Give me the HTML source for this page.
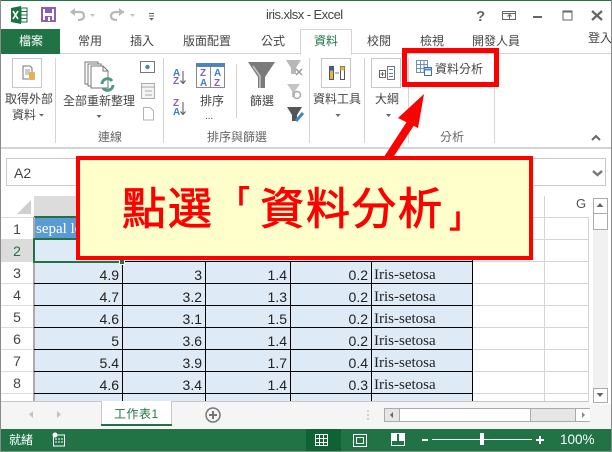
<!DOCTYPE html>
<html><head><meta charset="utf-8">
<style>
html,body{margin:0;padding:0;background:#fff}
#p{position:relative;width:612px;height:452px;overflow:hidden;background:#fff;font-family:"Liberation Sans","Noto Sans CJK TC",sans-serif;font-size:12px;color:#444}
.a{position:absolute}
.t{position:absolute;white-space:nowrap;line-height:16px;text-align:left;font-size:12px}
.c{position:absolute;white-space:nowrap;font-size:14px;color:#222;text-align:right;line-height:20px}
.s{position:absolute;white-space:nowrap;font-family:"Liberation Serif",serif;font-size:15px;color:#222;line-height:20px}
.r{position:absolute;left:1px;width:32px;text-align:center;font-size:14px;color:#444;line-height:22px}
.k{position:absolute;z-index:7;white-space:nowrap;font-family:'Noto Sans CJK JP',sans-serif;font-weight:400;-webkit-text-stroke:.9px #f00;font-size:44px;line-height:50px;letter-spacing:2px;color:#f00;top:180px}
.b{position:absolute;z-index:7;white-space:nowrap;font-family:'Noto Sans CJK JP',sans-serif;font-weight:700;font-size:30px;line-height:30px;color:#f00}
svg{position:absolute;left:0;top:0}
</style></head><body>
<div id="p">
<!-- frame -->
<div class="a" style="left:0;top:0;width:612px;height:1px;background:#217346"></div>
<div class="a" style="left:0;top:0;width:1px;height:452px;background:#8a8a8a"></div>
<div class="a" style="left:611px;top:0;width:1px;height:452px;background:#8a8a8a"></div>
<div class="a" style="left:0;top:451px;width:612px;height:1px;background:#8a8a8a"></div>
<!-- title -->
<div class="t" style="left:266px;top:7px;font-size:13px;letter-spacing:-.55px;color:#444">iris.xlsx - Excel</div>
<!-- tabs -->
<div class="a" style="left:1px;top:53px;width:610px;height:1px;background:#d4d4d4"></div>
<div class="a" style="left:1px;top:29px;width:59px;height:25px;background:#217346"></div>
<div class="t" style="left:19px;top:33px;color:#fff">檔案</div>
<div class="t" style="left:78px;top:33px">常用</div>
<div class="t" style="left:130px;top:33px">插入</div>
<div class="t" style="left:183px;top:33px">版面配置</div>
<div class="t" style="left:261px;top:33px">公式</div>
<div class="a" style="left:300px;top:29px;width:50px;height:25px;background:#fff;border:1px solid #d4d4d4;border-bottom:none"></div>
<div class="t" style="left:314px;top:33px;color:#217346">資料</div>
<div class="t" style="left:367px;top:33px">校閱</div>
<div class="t" style="left:420px;top:33px">檢視</div>
<div class="t" style="left:472px;top:33px">開發人員</div>
<div class="t" style="left:588px;top:30px">登入</div>
<!-- ribbon text -->
<div class="t" style="left:5px;top:91px">取得外部</div>
<div class="t" style="left:12px;top:107px">資料</div>
<div class="t" style="left:63px;top:93px">全部重新整理</div>
<div class="t" style="left:98px;top:129px;color:#666">連線</div>
<div class="t" style="left:200px;top:93px">排序</div>
<div class="t" style="left:205px;top:109px;font-size:10px">...</div>
<div class="t" style="left:207px;top:129px;color:#666">排序與篩選</div>
<div class="t" style="left:250px;top:93px">篩選</div>
<div class="t" style="left:313px;top:91px">資料工具</div>
<div class="t" style="left:375px;top:91px">大綱</div>
<div class="t" style="left:435px;top:61px">資料分析</div>
<div class="t" style="left:440px;top:129px;color:#666">分析</div>
<!-- formula bar -->
<div class="a" style="left:1px;top:147px;width:610px;height:2px;background:#d4d4d4"></div>
<div class="a" style="left:6px;top:158px;width:598px;height:26px;border:1px solid #c8c8c8"></div>
<div class="t" style="left:14px;top:165px;font-size:14px;color:#444">A2</div>
<!-- grid header -->
<div class="a" style="left:34px;top:196px;width:89px;height:21px;background:#dcdcdc"></div>
<div class="a" style="left:34px;top:216px;width:89px;height:2px;background:#217346"></div>
<div class="t" style="left:576px;top:196px;font-size:13px;color:#555">G</div>
<div class="a" style="left:34px;top:218px;width:88px;height:21px;background:#5b9bd5"></div>
<div class="s" style="left:36px;top:219px;color:#fff">sepal length</div>
<div class="a" style="left:34px;top:239px;width:438px;height:162px;background:#deeaf6"></div>
<!-- row header -->
<div class="a" style="left:1px;top:196px;width:33px;height:205px;background:#fff"></div>
<div class="a" style="left:1px;top:239px;width:33px;height:22px;background:#dcdcdc"></div>
<div class="a" style="left:33px;top:217px;width:2px;height:184px;background:#ababab"></div>
<div class="r" style="top:218px">1</div>
<div class="r" style="top:240px;color:#217346">2</div>
<div class="r" style="top:262px">3</div>
<div class="r" style="top:284px">4</div>
<div class="r" style="top:306px">5</div>
<div class="r" style="top:328px">6</div>
<div class="r" style="top:350px">7</div>
<div class="r" style="top:372px">8</div>
<svg width="612" height="452" style="z-index:1">
<g stroke="#dcdcdc" fill="none">
<path d="M1 217.5H33M1 239.5H33M1 261.5H33M1 283.5H33M1 305.5H33M1 327.5H33M1 349.5H33M1 371.5H33M1 393.5H33"/>
</g>
<path d="M31 200V214H17Z" fill="#cfcfcf"/>
<g stroke="#d4d4d4" fill="none">
<path d="M472 217.5H589M472 239.5H589M472 261.5H589M472 283.5H589M472 305.5H589M472 327.5H589M472 349.5H589M472 371.5H589M472 393.5H589"/>
<path d="M544.5 196V401M588.5 217V401"/>
</g>
<g stroke="#000" fill="none">
<path d="M34 261.5H472M34 283.5H472M34 305.5H472M34 327.5H472M34 349.5H472M34 371.5H472M34 393.5H472"/>
<path d="M122.5 261V401M205.5 261V401M290.5 261V401M371.5 261V401M472.5 218V401"/>
</g>
<rect x="34" y="239" width="88" height="23" fill="none" stroke="#217346" stroke-width="2"/>
<rect x="119.5" y="259.5" width="5" height="5" fill="#217346" stroke="#fff"/>
</svg>
<div style="position:absolute;left:0;top:0;z-index:2">
<div class="c" style="left:59px;top:265px;width:60px">4.9</div><div class="c" style="left:142px;top:265px;width:60px">3</div><div class="c" style="left:227px;top:265px;width:60px">1.4</div><div class="c" style="left:308px;top:265px;width:60px">0.2</div><div class="s" style="left:374px;top:265px">Iris-setosa</div>
<div class="c" style="left:59px;top:287px;width:60px">4.7</div><div class="c" style="left:142px;top:287px;width:60px">3.2</div><div class="c" style="left:227px;top:287px;width:60px">1.3</div><div class="c" style="left:308px;top:287px;width:60px">0.2</div><div class="s" style="left:374px;top:287px">Iris-setosa</div>
<div class="c" style="left:59px;top:309px;width:60px">4.6</div><div class="c" style="left:142px;top:309px;width:60px">3.1</div><div class="c" style="left:227px;top:309px;width:60px">1.5</div><div class="c" style="left:308px;top:309px;width:60px">0.2</div><div class="s" style="left:374px;top:309px">Iris-setosa</div>
<div class="c" style="left:59px;top:331px;width:60px">5</div><div class="c" style="left:142px;top:331px;width:60px">3.6</div><div class="c" style="left:227px;top:331px;width:60px">1.4</div><div class="c" style="left:308px;top:331px;width:60px">0.2</div><div class="s" style="left:374px;top:331px">Iris-setosa</div>
<div class="c" style="left:59px;top:353px;width:60px">5.4</div><div class="c" style="left:142px;top:353px;width:60px">3.9</div><div class="c" style="left:227px;top:353px;width:60px">1.7</div><div class="c" style="left:308px;top:353px;width:60px">0.4</div><div class="s" style="left:374px;top:353px">Iris-setosa</div>
<div class="c" style="left:59px;top:375px;width:60px">4.6</div><div class="c" style="left:142px;top:375px;width:60px">3.4</div><div class="c" style="left:227px;top:375px;width:60px">1.4</div><div class="c" style="left:308px;top:375px;width:60px">0.3</div><div class="s" style="left:374px;top:375px">Iris-setosa</div>
</div>
<!-- vertical scrollbar -->
<div class="a" style="z-index:3;left:589px;top:196px;width:22px;height:209px;background:#fff"></div>
<div class="a" style="z-index:3;left:593px;top:198px;width:15px;height:205px;background:#f1f1f1"></div>
<div class="a" style="z-index:3;left:593px;top:198px;width:13px;height:14px;background:#fff;border:1px solid #ababab"></div>
<div class="a" style="z-index:3;left:593px;top:213px;width:13px;height:15px;background:#fff;border:1px solid #ababab"></div>
<div class="a" style="z-index:3;left:593px;top:388px;width:13px;height:13px;background:#fff;border:1px solid #ababab"></div>
<!-- sheet bar -->
<div class="a" style="z-index:3;left:1px;top:401px;width:588px;height:28px;background:#f5f5f5;border-top:1px solid #c8c8c8;box-sizing:border-box"></div>
<div class="a" style="z-index:3;left:589px;top:404px;width:22px;height:25px;background:#f5f5f5"></div>
<div class="a" style="z-index:3;left:101px;top:401px;width:71px;height:25px;background:#fff;border-left:1px solid #c8c8c8;border-right:1px solid #c8c8c8;box-sizing:border-box"></div>
<div class="a" style="z-index:3;left:101px;top:424px;width:71px;height:2px;background:#217346"></div>
<div class="t" style="z-index:3;left:114px;top:406px;color:#217346;font-size:12px;letter-spacing:.5px">工作表1</div>
<div class="a" style="z-index:3;left:384px;top:408px;width:204px;height:12px;background:#e6e6e6;border:1px solid #ababab"></div>
<div class="a" style="z-index:3;left:399px;top:409px;width:132px;height:12px;background:#fff;border-left:1px solid #ababab;border-right:1px solid #ababab;box-sizing:border-box"></div>
<div class="a" style="z-index:3;left:575px;top:409px;width:14px;height:12px;background:#fff;border-left:1px solid #ababab"></div>
<!-- status bar -->
<div class="a" style="z-index:3;left:1px;top:429px;width:610px;height:22px;background:#217346"></div>
<div class="a" style="z-index:3;left:306px;top:429px;width:35px;height:22px;background:#0f6234"></div>
<div class="t" style="z-index:3;left:9px;top:432px;color:#fff;font-size:12px">就緒</div>
<div class="t" style="z-index:3;left:560px;top:432px;color:#fff;font-size:13.5px">100%</div>
<!-- icons -->
<svg width="612" height="452" style="z-index:4">
<path d="M11 8L21 6V24L11 22Z" fill="#1e7145"/><rect x="21" y="8" width="6" height="14" fill="#fff" stroke="#1e7145"/>
<path d="M21 11.5H27M21 15H27M21 18.5H27" stroke="#1e7145"/>
<path d="M13 11L18 19M18 11L13 19" stroke="#fff" stroke-width="1.6"/>
<rect x="42" y="8" width="13" height="13" fill="#fff" stroke="#8a5fb5" stroke-width="2"/>
<rect x="45" y="8" width="7" height="5" fill="#8a5fb5"/><rect x="45" y="16" width="7" height="6" fill="#8a5fb5"/><rect x="48" y="17" width="2" height="4" fill="#fff"/>
<path d="M72 12H80Q84 12 84 16Q84 20 78 20" fill="none" stroke="#b8b8b8" stroke-width="2.2"/><path d="M70 12L75 8V16Z" fill="#b8b8b8"/>
<path d="M90 14L95 14L92.500 17Z" fill="#c4c4c4"/>
<path d="M124 12H117Q111 12 111 16Q111 20 117 20" fill="none" stroke="#b8b8b8" stroke-width="2.2"/><path d="M124 12L119 8V16Z" fill="#b8b8b8"/>
<path d="M130 14L135 14L132.500 17Z" fill="#c4c4c4"/>
<path d="M149 13.500H154M149 16H154" stroke="#666"/><path d="M149 18L154 18L151.500 20.500Z" fill="#666"/>
<text x="476" y="21" font-family="Liberation Sans" font-weight="bold" font-size="15" fill="#666">?</text>
<rect x="502.500" y="11.500" width="13" height="8" fill="none" stroke="#666"/><path d="M503 13.500H516" stroke="#666"/><path d="M509.500 19V15M507.500 16.500L509.500 14.500L511.500 16.500" stroke="#666" fill="none"/>
<path d="M533 17H542" stroke="#666" stroke-width="2"/>
<rect x="563" y="11" width="9" height="9" fill="none" stroke="#666"/><path d="M563 11.500H572" stroke="#666" stroke-width="2"/>
<path d="M592 11L602 20M602 11L592 20" stroke="#666" stroke-width="2.2"/>
<path d="M55.500 58V143M163.500 58V143M236.500 64V118M309.500 58V143M364.500 58V143M408.500 58V143M494.500 58V143" stroke="#d4d4d4"/>
<rect x="12.500" y="58.500" width="29" height="29" fill="#fff" stroke="#c8c8c8"/>
<path d="M23 66H30L32 68V79H23Z" fill="#fff" stroke="#777"/><path d="M25 70H30M25 72H30M25 74H30" stroke="#999"/>
<rect x="29" y="72" width="6" height="8" rx="1" fill="#e8b04f"/>
<path d="M39 114L44 114L41.500 116.500Z" fill="#666"/>
<g fill="#fff" stroke="#777"><path d="M85 62H98V84H85Z"/><path d="M88 64H101V86H88Z"/><path d="M91 66H103L108 71V88H91Z"/></g>
<path d="M103 66V71H108" fill="none" stroke="#777"/>
<path d="M102 84A5.500 5.500 0 0 1 112 81M113 85A5.500 5.500 0 0 1 103 88" fill="none" stroke="#4f9a84" stroke-width="3"/>
<path d="M96.500 115L101.500 115L99 118Z" fill="#666"/>
<rect x="140.500" y="61.500" width="14" height="11" fill="#fff" stroke="#777"/><circle cx="147.500" cy="67" r="2.200" fill="#3f87c5"/>
<rect x="141.500" y="83.500" width="13" height="15" fill="#f4f4f4" stroke="#aaa"/><path d="M141 87H155M145 91H152M145 95H152" stroke="#aaa"/>
<path d="M143.500 107.500H150L153.500 111V120H143.500Z" fill="#fff" stroke="#b4b4b4"/>
<g font-family="Liberation Sans" font-size="10" font-weight="bold">
<text x="173" y="76" fill="#3f7fc0">A</text><text x="173" y="84" fill="#8a5fb5">Z</text>
<text x="173" y="106" fill="#8a5fb5">Z</text><text x="173" y="115" fill="#3f7fc0">A</text></g>
<path d="M183 71V83M180.500 80.500L183 83.500L185.500 80.500" stroke="#555" fill="none"/>
<path d="M183 102V114M180.500 111.500L183 114.500L185.500 111.500" stroke="#555" fill="none"/>
<rect x="196.500" y="63.500" width="28" height="24" fill="#fff" stroke="#8a8a8a"/><rect x="196" y="63" width="29" height="4" fill="#4e84ba"/><path d="M210.500 67V88" stroke="#8a8a8a"/>
<g font-family="Liberation Sans" font-size="10" font-weight="bold">
<text x="200" y="76" fill="#8a5fb5">Z</text><text x="200" y="86" fill="#3f7fc0">A</text><text x="214" y="76" fill="#3f7fc0">A</text><text x="214" y="86" fill="#8a5fb5">Z</text></g>
<path d="M248 62H275L265 77V88H258V77Z" fill="#7a7a7a"/><path d="M253 66L260 76V88" fill="none" stroke="#c8c8c8" stroke-width="1.500"/>
<path d="M286 60H301L296 68V74H291V68Z" fill="#b8b8b8"/><path d="M296 69L302 75M302 69L296 75" stroke="#999" stroke-width="1.500"/>
<path d="M287 84H300L295 91V97H292V91Z" fill="#c4c4c4"/><circle cx="297" cy="95" r="3.500" fill="none" stroke="#aaa" stroke-width="1.500"/>
<path d="M287 107H302L297 115V121H292V115Z" fill="#555"/><path d="M296 121L303 113" stroke="#3f87c5" stroke-width="3"/>
<rect x="321.500" y="58.500" width="29" height="29" fill="#fff" stroke="#c8c8c8"/>
<rect x="329.500" y="66.500" width="4" height="13" fill="#e8b04f" stroke="#555"/><rect x="340.500" y="66.500" width="4" height="13" fill="#fff" stroke="#555"/><rect x="329.500" y="66.500" width="4" height="4" fill="#3f5f8a"/><rect x="340.500" y="66.500" width="4" height="4" fill="#e8b04f"/>
<path d="M335 73H339" stroke="#3f87c5"/>
<path d="M335.500 114L340.500 114L338 117Z" fill="#666"/>
<rect x="371.500" y="58.500" width="29" height="29" fill="#fff" stroke="#c8c8c8"/>
<rect x="379.500" y="70.500" width="6" height="7" fill="#fff" stroke="#666"/><path d="M380.500 74H384.500M382.500 72V76" stroke="#666"/>
<rect x="387.500" y="66.500" width="7" height="13" fill="#fff" stroke="#777"/><path d="M389 69.500H393M389 73.500H393M389 76.500H393" stroke="#3f87c5"/>
<path d="M386 114L391 114L388.500 117Z" fill="#666"/>
<rect x="416.500" y="60.500" width="11" height="12" fill="#fff" stroke="#6f8fb5"/><path d="M417 64.500H428M417 68.500H428M420.500 61V73M424 61V73" stroke="#6f8fb5"/>
<rect x="424.500" y="67.500" width="7" height="8" fill="#fff" stroke="#3f6fa5"/><path d="M424 69.500H432" stroke="#3f87c5" stroke-width="2"/>
<path d="M592 140L596 136L600 140" stroke="#666" stroke-width="2" fill="none"/>
<path d="M593 171L597.500 175L602 171" stroke="#777" stroke-width="2.500" fill="none"/>
<path d="M596.500 207L603.500 207L600 203Z" fill="#666"/>
<path d="M596.500 393L603.500 393L600 397Z" fill="#666"/>
<path d="M33 411V418L29 414.500Z" fill="#c4c4c4"/><path d="M57 411V418L61 414.500Z" fill="#c4c4c4"/>
<circle cx="213" cy="415" r="7" fill="none" stroke="#777" stroke-width="1.500"/><path d="M209 415H217M213 411V419" stroke="#777" stroke-width="2"/>
<path d="M368 410.500V411.500M368 414.500V415.500M368 418.500V419.500" stroke="#aaa" stroke-width="2"/>
<path d="M393 412V418L390 415Z" fill="#666"/><path d="M582 412V418L585 415Z" fill="#888"/>
<rect x="53.500" y="435" width="11" height="11" fill="none" stroke="#fff"/><circle cx="55" cy="435" r="2.500" fill="#fff"/><path d="M55 439H64M55 442H64" stroke="#fff" stroke-dasharray="2 1"/>
<path d="M315.500 434.500H327.500V445.500H315.500ZM319.500 434.500V445.500M323.500 434.500V445.500M315.500 438.500H327.500M315.500 442.500H327.500" fill="none" stroke="#fff"/>
<rect x="353.500" y="434.500" width="13" height="12" fill="none" stroke="#fff"/><rect x="356.500" y="437.500" width="7" height="6" fill="none" stroke="#fff"/>
<rect x="391.500" y="433.500" width="13" height="12" fill="none" stroke="#fff"/><rect x="392" y="434" width="5" height="7" fill="#fff"/><rect x="399" y="434" width="5" height="7" fill="#fff"/>
<path d="M422 440H428" stroke="#fff" stroke-width="2"/><path d="M432 439.500H532" stroke="#fff"/><rect x="480" y="433" width="4" height="12" fill="#fff"/>
<path d="M536 440H544M540 436V444" stroke="#fff" stroke-width="2"/>
</svg>
<!-- annotation -->
<svg width="612" height="452" style="z-index:5">
<path d="M388 158L414 118" stroke="#f00" stroke-width="8" fill="none"/>
<path d="M424 94L398 118L418 128Z" fill="#f00"/>
</svg>
<div class="a" style="z-index:6;left:402px;top:48px;width:97px;height:39px;border:5.500px solid #f00;box-sizing:border-box"></div>
<div class="a" style="z-index:6;left:76px;top:156px;width:457px;height:104px;background:#ffc;border:4.500px solid #f00;box-sizing:border-box"></div>
<div class="k" style="left:122px">點選</div>
<div class="b" style="left:220px;top:184px">「</div>
<div class="k" style="left:260px">資料分析</div>
<div class="b" style="left:449px;top:200px">」</div>
</div>
</body></html>
